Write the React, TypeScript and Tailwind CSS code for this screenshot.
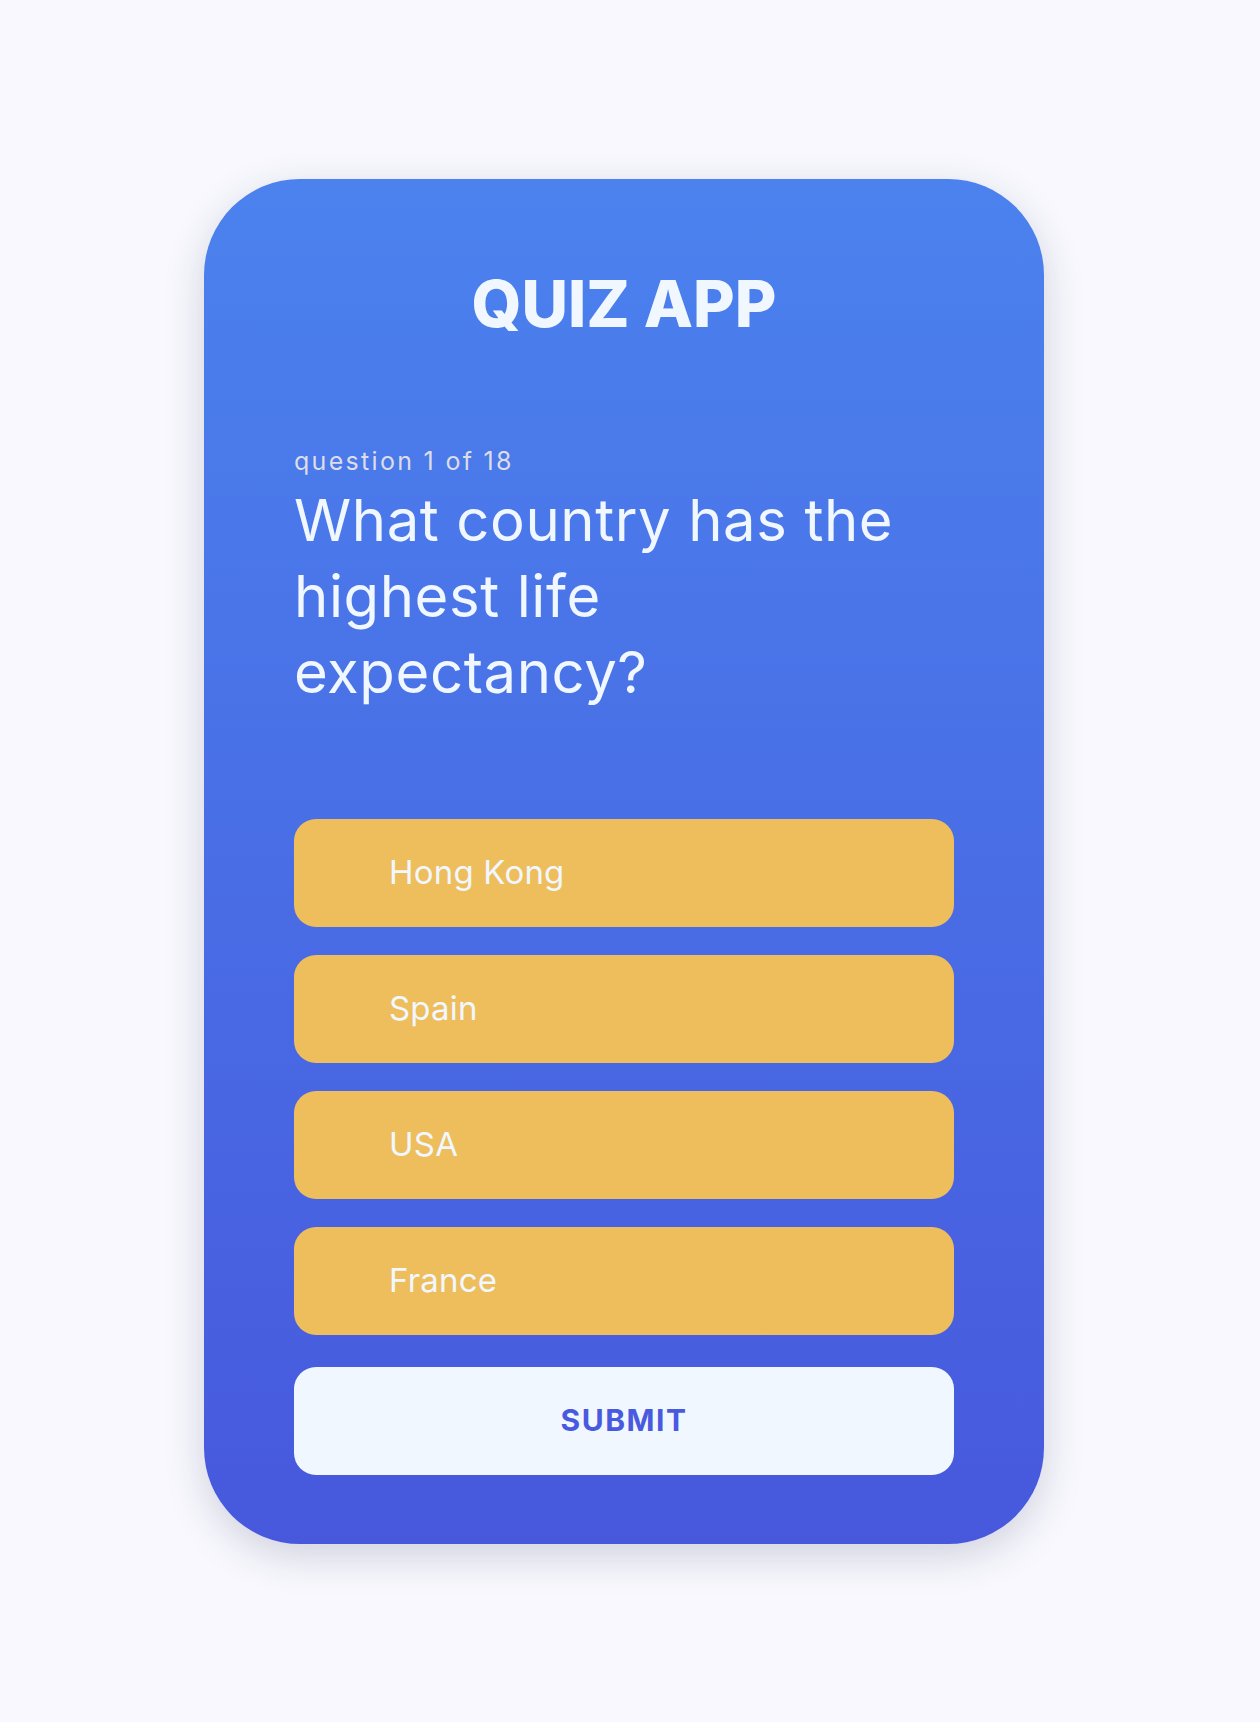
import React from "react";

const answers = ["Hong Kong", "Spain", "USA", "France"];

export default function App() {
  return (
    <div
      className="min-h-screen w-full bg-[#f8f8fe] flex items-center justify-center pr-[12px]"
      style={{ fontFamily: "Inter, 'Open Sans', sans-serif" }}
    >
      <div className="w-[840px] h-[1365px] rounded-[96px] bg-gradient-to-b from-[#4b82ee] to-[#4758dd] shadow-[0_12px_40px_rgba(40,40,80,0.18)] pt-[93px] px-[90px] pb-[69px] flex flex-col">
        <h1 className="text-[64px] leading-[64px] font-extrabold text-[#f0f7ff] text-center">
          QUIZ APP
        </h1>
        <div className="mt-[113px] text-[25px] leading-[24px] tracking-[2.3px] text-[#dcdde6]">
          question 1 of 18
        </div>
        <div className="mt-[9px] text-[58px] leading-[76px] tracking-[0.6px] text-[#f0f7ff] whitespace-nowrap">
          What country has the
          <br />
          highest life
          <br />
          expectancy?
        </div>
        <div className="mt-[109px] flex flex-col gap-[28px]">
          {answers.map((a) => (
            <div
              key={a}
              className="h-[108px] rounded-[22px] bg-[#efbe5c] flex items-center pl-[95px] text-[33px] tracking-[0.2px] text-[#f0f7ff]"
            >
              {a}
            </div>
          ))}
        </div>
        <div className="mt-[32px] h-[108px] rounded-[22px] bg-[#f0f7fe] flex items-center justify-center text-[30px] font-bold tracking-[1.5px] text-[#4a5ae0]">
          SUBMIT
        </div>
      </div>
    </div>
  );
}
